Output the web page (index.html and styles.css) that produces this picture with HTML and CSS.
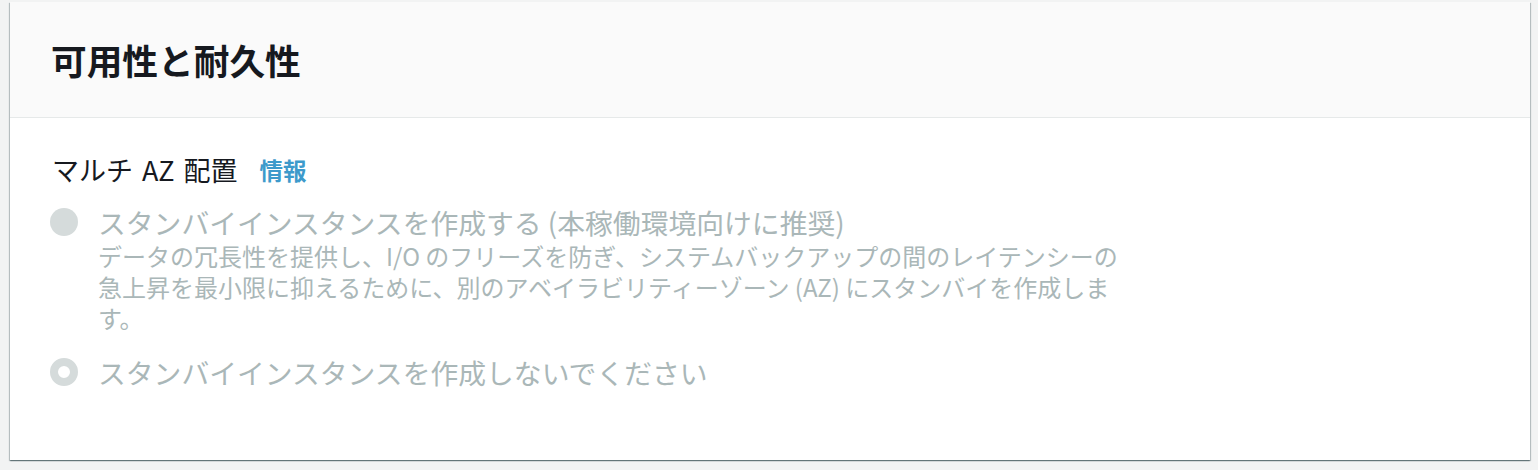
FILE: index.html
```html
<!DOCTYPE html>
<html lang="ja">
<head>
<meta charset="utf-8">
<title>可用性と耐久性</title>
<link rel="stylesheet" href="styles.css">
</head>
<body>
<div class="page">
  <section class="card">
    <header class="card-header">
      <h2 class="card-title">可用性と耐久性</h2>
    </header>
    <div class="card-body">
      <div class="field-label">
        <span class="label-text">マルチ AZ 配置</span>
        <a class="info-link" href="#">情報</a>
      </div>
      <div class="radio-group">
        <div class="radio-option">
          <span class="radio radio-off"></span>
          <div class="radio-content">
            <div class="radio-label">スタンバイインスタンスを作成する (本稼働環境向けに推奨)</div>
            <div class="radio-desc">データの冗長性を提供し、I/O のフリーズを防ぎ、システムバックアップの間のレイテンシーの急上昇を最小限に抑えるために、別のアベイラビリティーゾーン (AZ) にスタンバイを作成します。</div>
          </div>
        </div>
        <div class="radio-option option-second">
          <span class="radio radio-on"></span>
          <div class="radio-content">
            <div class="radio-label">スタンバイインスタンスを作成しないでください</div>
          </div>
        </div>
      </div>
    </div>
  </section>
</div>
</body>
</html>
```

FILE: styles.css
```css
html, body {
  margin: 0;
  padding: 0;
  background: #f2f3f3;
}

body {
  font-family: "Noto Sans CJK JP", "Noto Sans", sans-serif;
  color: #16191f;
}

.page {
  padding: 2px 8px 10px 10px;
}

.card {
  background: #ffffff;
  height: 458px;
  box-sizing: border-box;
  box-shadow: 0 1px 1px 0 rgba(0, 28, 36, 0.35),
              1px 1px 1px 0 rgba(0, 28, 36, 0.2),
              -1px 1px 1px 0 rgba(0, 28, 36, 0.2);
  display: flex;
  flex-direction: column;
}

.card-header {
  background: #fafafa;
  height: 116px;
  box-sizing: border-box;
  border-bottom: 1px solid #e6e9e9;
  display: flex;
  align-items: center;
  padding-left: 41px;
}

.card-title {
  margin: 0;
  font-size: 35.7px;
  line-height: 44px;
  font-weight: 700;
  color: #16191f;
}

.card-body {
  padding: 34px 0 0 40px;
}

.field-label {
  display: flex;
  align-items: center;
  height: 36px;
  padding-left: 2px;
}

.label-text {
  font-size: 27px;
  line-height: 36px;
  color: #16191f;
  word-spacing: 3px;
}

.info-link {
  margin-left: 22px;
  font-size: 23.5px;
  font-weight: 700;
  line-height: 36px;
  color: #3d9acb;
  text-decoration: none;
}

.radio-group {
  margin-top: 16px;
  display: flex;
  flex-direction: column;
}

.radio-option {
  display: flex;
  align-items: flex-start;
}

.option-second {
  margin-top: 21px;
}

.radio {
  flex: none;
  width: 28px;
  height: 28px;
  border-radius: 50%;
  margin-top: 4px;
  box-sizing: border-box;
  background: #d5dbdb;
}

.radio-on {
  background: #ffffff;
  border: 8px solid #d5dbdb;
}

.radio-content {
  margin-left: 20px;
  display: flex;
  flex-direction: column;
}

.radio-label {
  font-size: 27.8px;
  line-height: 34px;
  margin: 1px 0;
  color: #aab7b8;
}

.radio-desc {
  width: 1020px;
  font-size: 24px;
  line-height: 31px;
  color: #aab7b8;
}
```
